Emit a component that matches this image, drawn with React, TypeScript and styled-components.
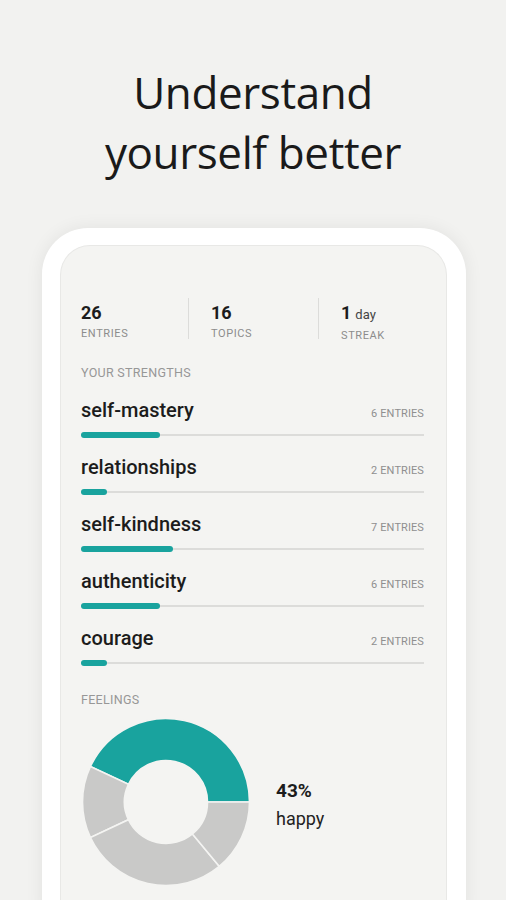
import React from "react";
import styled, { createGlobalStyle } from "styled-components";

const GlobalStyle = createGlobalStyle`
  html, body {
    margin: 0;
    padding: 0;
    height: 900px;
    overflow: hidden;
    background: #f2f2f0;
  }
`;

const teal = "#19a39e";

const Page = styled.div`
  display: flex;
  flex-direction: column;
  align-items: center;
  height: 900px;
  overflow: hidden;
  font-family: Roboto, "Liberation Sans", sans-serif;
  color: #1e1e1e;
`;

const Title = styled.h1`
  margin: 62px 0 0;
  font-family: "Open Sans", "Liberation Sans", sans-serif;
  font-weight: 400;
  font-size: 44px;
  line-height: 60px;
  letter-spacing: -0.4px;
  text-align: center;
  color: #1a1a1a;
`;

const Frame = styled.div`
  margin-top: 46px;
  margin-left: 2px;
  width: 424px;
  height: 720px;
  flex-shrink: 0;
  box-sizing: border-box;
  padding: 17px 19px 0 18px;
  background: #ffffff;
  border-radius: 46px;
  box-shadow: 0 0 18px rgba(0, 0, 0, 0.07);
`;

const Screen = styled.div`
  height: 100%;
  box-sizing: border-box;
  padding: 52px 22px 0 20px;
  background: #f4f4f2;
  border: 1px solid #e8e8e6;
  border-bottom: none;
  border-radius: 30px 30px 0 0;
`;

const Stats = styled.div`
  display: grid;
  grid-template-columns: 107px 130px 1fr;
`;

const Stat = styled.div<{ $divided?: boolean }>`
  display: flex;
  flex-direction: column;
  height: 41px;
  padding-left: ${(p) => (p.$divided ? "22px" : "0")};
  border-left: ${(p) => (p.$divided ? "1px solid #dcdcda" : "none")};
`;

const StatValue = styled.div`
  font-size: 18px;
  font-weight: 700;
  line-height: 22px;
  margin-top: 4px;
  color: #1c1c1c;
`;

const StatUnit = styled.span`
  font-size: 13px;
  font-weight: 400;
  color: #444;
  margin-left: 4px;
`;

const Caption = styled.div`
  font-size: 11px;
  line-height: 14px;
  margin-top: 3px;
  letter-spacing: 0.6px;
  text-transform: uppercase;
  color: #8c8c8c;
`;

const SectionLabel = styled.div<{ $top: number }>`
  margin-top: ${(p) => p.$top}px;
  font-size: 12.5px;
  line-height: 16px;
  letter-spacing: 0.3px;
  text-transform: uppercase;
  color: #979797;
`;

const StrengthList = styled.div`
  display: flex;
  flex-direction: column;
  margin-top: 16px;
`;

const StrengthRow = styled.div`
  display: flex;
  flex-direction: column;
  height: 57px;
`;

const StrengthHead = styled.div`
  display: flex;
  justify-content: space-between;
  align-items: baseline;
  height: 26px;
  line-height: 27px;
`;

const StrengthName = styled.span`
  font-size: 20px;
  font-weight: 500;
  color: #1c1c1c;
`;

const EntryCount = styled.span`
  font-size: 11px;
  letter-spacing: 0.1px;
  text-transform: uppercase;
  color: #8f8f8f;
`;

const Track = styled.div`
  position: relative;
  margin-top: 9px;
  height: 6px;
  display: flex;
  align-items: center;
  &::before {
    content: "";
    position: absolute;
    left: 0;
    right: 0;
    height: 2px;
    background: #dcdcda;
  }
`;

const Fill = styled.div`
  position: relative;
  height: 6px;
  border-radius: 3px;
  background: ${teal};
`;

const Feelings = styled.div`
  display: flex;
  align-items: center;
  gap: 26px;
  margin-top: 10px;
  padding-left: 1px;
`;

const Legend = styled.div`
  display: flex;
  flex-direction: column;
  margin-top: 8px;
`;

const Percent = styled.div`
  font-size: 19px;
  font-weight: 700;
  line-height: 26px;
  color: #1c1c1c;
`;

const Mood = styled.div`
  font-size: 18px;
  line-height: 30px;
  color: #222;
`;

const strengths = [
  { name: "self-mastery", entries: 6, width: 79 },
  { name: "relationships", entries: 2, width: 26 },
  { name: "self-kindness", entries: 7, width: 92 },
  { name: "authenticity", entries: 6, width: 79 },
  { name: "courage", entries: 2, width: 26 },
];

const slices = [
  { frac: 0.43, color: teal },
  { frac: 0.14, color: "#c9c9c8" },
  { frac: 0.29, color: "#c9c9c8" },
  { frac: 0.14, color: "#c9c9c8" },
];

function arcPath(cx: number, cy: number, R: number, r: number, a0: number, a1: number) {
  const pt = (rad: number, a: number) => {
    const t = (a * Math.PI) / 180;
    return `${(cx + rad * Math.cos(t)).toFixed(2)} ${(cy - rad * Math.sin(t)).toFixed(2)}`;
  };
  const large = a1 - a0 > 180 ? 1 : 0;
  return [
    `M ${pt(R, a0)}`,
    `A ${R} ${R} 0 ${large} 0 ${pt(R, a1)}`,
    `L ${pt(r, a1)}`,
    `A ${r} ${r} 0 ${large} 1 ${pt(r, a0)}`,
    "Z",
  ].join(" ");
}

const Donut: React.FC = () => {
  let angle = 0;
  return (
    <svg width="168" height="168" viewBox="0 0 168 168">
      {slices.map((s, i) => {
        const a0 = angle;
        const a1 = angle + s.frac * 360;
        angle = a1;
        return (
          <path
            key={i}
            d={arcPath(84, 84, 83.5, 41.5, a0, a1)}
            fill={s.color}
            stroke="#f4f4f2"
            strokeWidth={1.6}
          />
        );
      })}
    </svg>
  );
};

const App: React.FC = () => {
  return (
    <Page>
      <GlobalStyle />
      <Title>
        Understand
        <br />
        yourself better
      </Title>
      <Frame>
        <Screen>
          <Stats>
            <Stat>
              <StatValue>26</StatValue>
              <Caption>Entries</Caption>
            </Stat>
            <Stat $divided>
              <StatValue>16</StatValue>
              <Caption>Topics</Caption>
            </Stat>
            <Stat $divided>
              <StatValue>
                1<StatUnit>day</StatUnit>
              </StatValue>
              <Caption>Streak</Caption>
            </Stat>
          </Stats>

          <SectionLabel $top={26}>Your strengths</SectionLabel>
          <StrengthList>
            {strengths.map((s) => (
              <StrengthRow key={s.name}>
                <StrengthHead>
                  <StrengthName>{s.name}</StrengthName>
                  <EntryCount>{s.entries} entries</EntryCount>
                </StrengthHead>
                <Track>
                  <Fill style={{ width: s.width }} />
                </Track>
              </StrengthRow>
            ))}
          </StrengthList>

          <SectionLabel $top={10}>Feelings</SectionLabel>
          <Feelings>
            <Donut />
            <Legend>
              <Percent>43%</Percent>
              <Mood>happy</Mood>
            </Legend>
          </Feelings>
        </Screen>
      </Frame>
    </Page>
  );
};

export default App;
